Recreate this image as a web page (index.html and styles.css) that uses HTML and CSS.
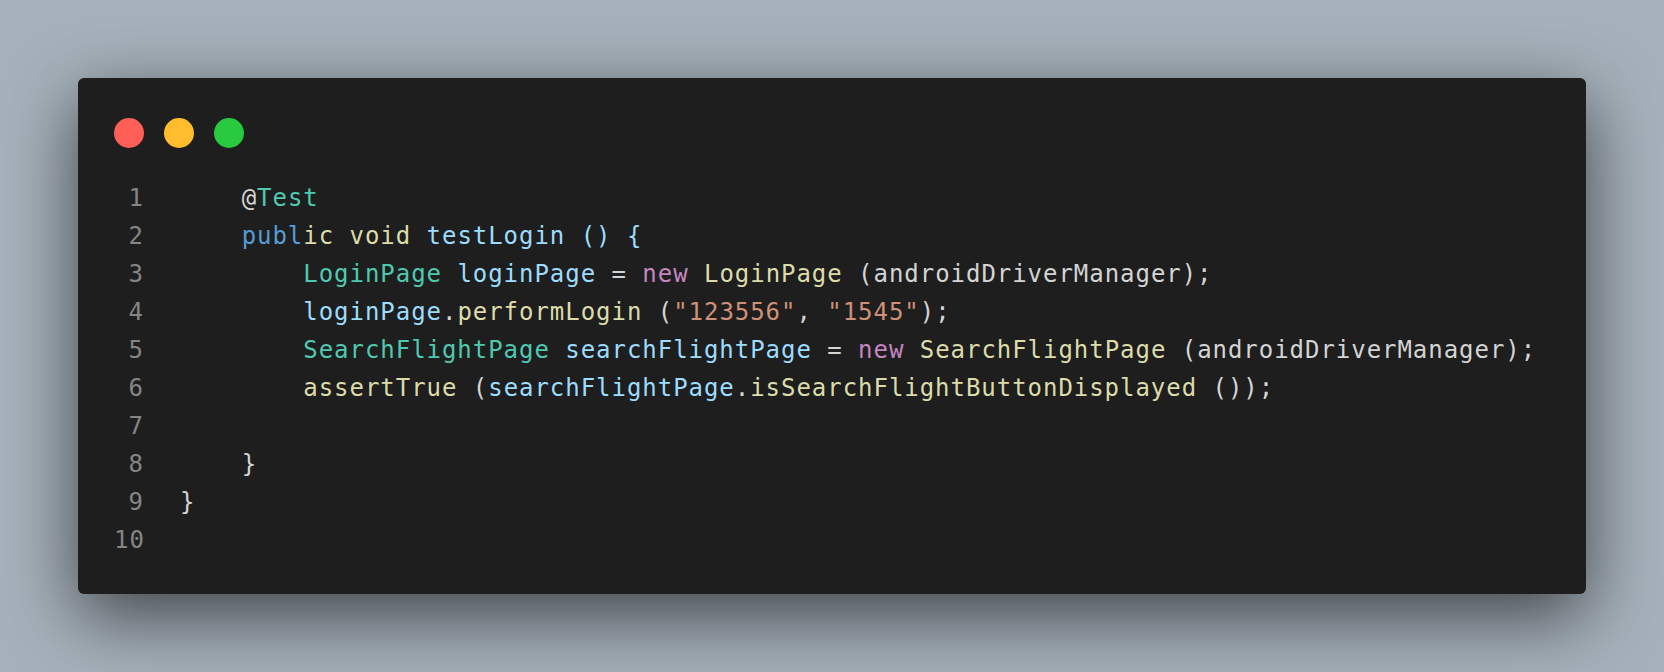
FILE: index.html
```html
<!DOCTYPE html>
<html lang="en">
<head>
    <meta charset="UTF-8">
    <title>testLogin</title>
    <link rel="stylesheet" href="styles.css">
</head>
<body>
    <div id="container">
        <div class="window">
            <div class="controls">
                <span class="dot red"></span>
                <span class="dot yellow"></span>
                <span class="dot green"></span>
            </div>
            <div class="code">
                <div class="line"><span class="ln">1</span><span class="src">    <span class="p">@</span><span class="t">Test</span></span></div>
                <div class="line"><span class="ln">2</span><span class="src">    <span class="k">publ</span><span class="f">ic void</span> <span class="v">testLogin () {</span></span></div>
                <div class="line"><span class="ln">3</span><span class="src">        <span class="t">LoginPage</span> <span class="v">loginPage</span> <span class="p">=</span> <span class="n">new</span> <span class="f">LoginPage</span> <span class="p">(androidDriverManager);</span></span></div>
                <div class="line"><span class="ln">4</span><span class="src">        <span class="v">loginPage</span><span class="p">.</span><span class="f">performLogin</span> <span class="p">(</span><span class="s">"123556"</span><span class="p">, </span><span class="s">"1545"</span><span class="p">);</span></span></div>
                <div class="line"><span class="ln">5</span><span class="src">        <span class="t">SearchFlightPage</span> <span class="v">searchFlightPage</span> <span class="p">=</span> <span class="n">new</span> <span class="f">SearchFlightPage</span> <span class="p">(androidDriverManager);</span></span></div>
                <div class="line"><span class="ln">6</span><span class="src">        <span class="f">assertTrue</span> <span class="p">(</span><span class="v">searchFlightPage</span><span class="p">.</span><span class="f">isSearchFlightButtonDisplayed</span> <span class="p">());</span></span></div>
                <div class="line"><span class="ln">7</span><span class="src"> </span></div>
                <div class="line"><span class="ln">8</span><span class="src">    <span class="p">}</span></span></div>
                <div class="line"><span class="ln">9</span><span class="src"><span class="p">}</span></span></div>
                <div class="line"><span class="ln">10</span><span class="src"> </span></div>
            </div>
        </div>
    </div>
</body>
</html>
```

FILE: styles.css
```css
body {
    margin: 0;
    padding: 0;
    height: 100vh;
    background-color: #a6b1bb;
    overflow: hidden;
}

#container {
    padding: 78px;
}

.window {
    background-color: #1e1e1e;
    border-radius: 6px;
    box-shadow: 0 22px 72px rgba(0, 0, 0, 0.62);
    padding: 40px 36px 35px 36px;
}

.controls {
    display: flex;
    gap: 20px;
    height: 30px;
    margin-bottom: 31px;
}

.dot {
    width: 30px;
    height: 30px;
    border-radius: 50%;
}

.red {
    background-color: #ff5f56;
}

.yellow {
    background-color: #ffbd2e;
}

.green {
    background-color: #27c93f;
}

.code {
    font-family: "DejaVu Sans Mono", monospace;
    font-size: 24px;
    letter-spacing: 0.96px;
    line-height: 38px;
    color: #d4d4d4;
}

.line {
    display: flex;
    height: 38px;
}

.ln {
    width: 30px;
    margin-right: 36px;
    text-align: right;
    color: #858585;
}

.src {
    white-space: pre;
}

.p { color: #d4d4d4; }
.t { color: #4ec9b0; }
.k { color: #569cd6; }
.f { color: #dcdcaa; }
.v { color: #9cdcfe; }
.n { color: #c586c0; }
.s { color: #ce9178; }
```
